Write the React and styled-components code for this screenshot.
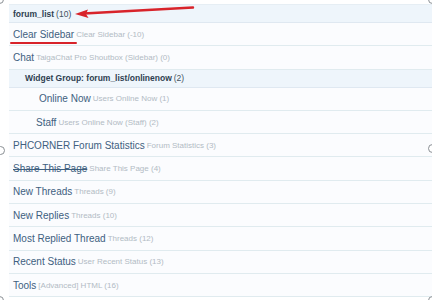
import React from 'react';
import styled, { createGlobalStyle } from 'styled-components';

const GlobalStyle = createGlobalStyle`
  html, body {
    margin: 0;
    padding: 0;
    background: #ffffff;
  }
  body {
    font-family: "Liberation Sans", Arial, sans-serif;
  }
`;

const Canvas = styled.div`
  position: relative;
  width: 432px;
  height: 300px;
  overflow: hidden;
  background: #ffffff;
  padding: 4px 0 0 9px;
  box-sizing: border-box;
`;

const List = styled.div`
  display: flex;
  flex-direction: column;
  border-top: 1px solid #e6eef4;
  background: #fbfcfe;
`;

const Row = styled.div`
  display: flex;
  align-items: center;
  gap: 2px;
  box-sizing: border-box;
  height: ${p => (p.$group ? '18px' : '23.3px')};
  padding-left: ${p => p.$indent || 4}px;
  background: ${p => (p.$group ? '#eef5fb' : '#fbfcfe')};
  border-bottom: 1px solid ${p => (p.$group ? '#dfe8f1' : '#e0ebef')};
  white-space: nowrap;
`;

const Title = styled.span`
  font-size: 10px;
  color: #40607f;
  text-decoration: ${p => (p.$struck ? 'line-through' : 'none')};
`;

const Muted = styled.span`
  font-size: 8px;
  color: #b2bbc4;
`;

const GroupName = styled.span`
  font-size: 8.5px;
  font-weight: bold;
  color: #2e3f51;
`;

const GroupCount = styled.span`
  font-size: 8.5px;
  color: #44525f;
`;

const Annotations = styled.svg`
  position: absolute;
  left: 0;
  top: 0;
  pointer-events: none;
`;

const Handle = styled.span`
  position: absolute;
  width: 7px;
  height: 7px;
  border-radius: 50%;
  border: 1px solid #8a8f94;
  background: #ffffff;
  left: ${p => p.$x}px;
  top: ${p => p.$y}px;
`;

const widgets = [
  { title: 'Clear Sidebar', info: 'Clear Sidebar (-10)' },
  { title: 'Chat', info: 'TaigaChat Pro Shoutbox (Sidebar) (0)' },
];

const grouped = [
  { title: 'Online Now', info: 'Users Online Now (1)', indent: 30 },
  { title: 'Staff', info: 'Users Online Now (Staff) (2)', indent: 27 },
];

const rest = [
  { title: 'PHCORNER Forum Statistics', info: 'Forum Statistics (3)' },
  { title: 'Share This Page', info: 'Share This Page (4)', struck: true },
  { title: 'New Threads', info: 'Threads (9)' },
  { title: 'New Replies', info: 'Threads (10)' },
  { title: 'Most Replied Thread', info: 'Threads (12)' },
  { title: 'Recent Status', info: 'User Recent Status (13)' },
  { title: 'Tools', info: '[Advanced] HTML (16)' },
];

const WidgetRow = ({ item }) => (
  <Row $indent={item.indent}>
    <Title $struck={item.struck}>{item.title}</Title>
    <Muted>{item.info}</Muted>
  </Row>
);

const App = () => {
  return (
    <>
      <GlobalStyle />
      <Canvas>
        <List>
          <Row $group>
            <GroupName>forum_list</GroupName>
            <GroupCount>(10)</GroupCount>
          </Row>
          {widgets.map((w, i) => <WidgetRow key={i} item={w} />)}
          <Row $group $indent={16}>
            <GroupName>Widget Group: forum_list/onlinenow</GroupName>
            <GroupCount>(2)</GroupCount>
          </Row>
          {grouped.map((w, i) => <WidgetRow key={i} item={w} />)}
          {rest.map((w, i) => <WidgetRow key={i} item={w} />)}
        </List>

        <Annotations width="432" height="300" viewBox="0 0 432 300">
          <line x1="193" y1="7.5" x2="84" y2="13.5" stroke="#d8232a" strokeWidth="2.4" strokeLinecap="round" />
          <path d="M75 14 L88 9.5 L86 14 L88.5 18 Z" fill="#d8232a" />
          <line x1="11" y1="43" x2="76" y2="43" stroke="#d8232a" strokeWidth="2" strokeLinecap="round" />
        </Annotations>

        <Handle $x={-5} $y={-5} />
        <Handle $x={428} $y={-5} />
        <Handle $x={-4} $y={146} />
        <Handle $x={428} $y={144} />
        <Handle $x={-5} $y={296} />
        <Handle $x={428} $y={296} />
      </Canvas>
    </>
  );
};

export default App;
